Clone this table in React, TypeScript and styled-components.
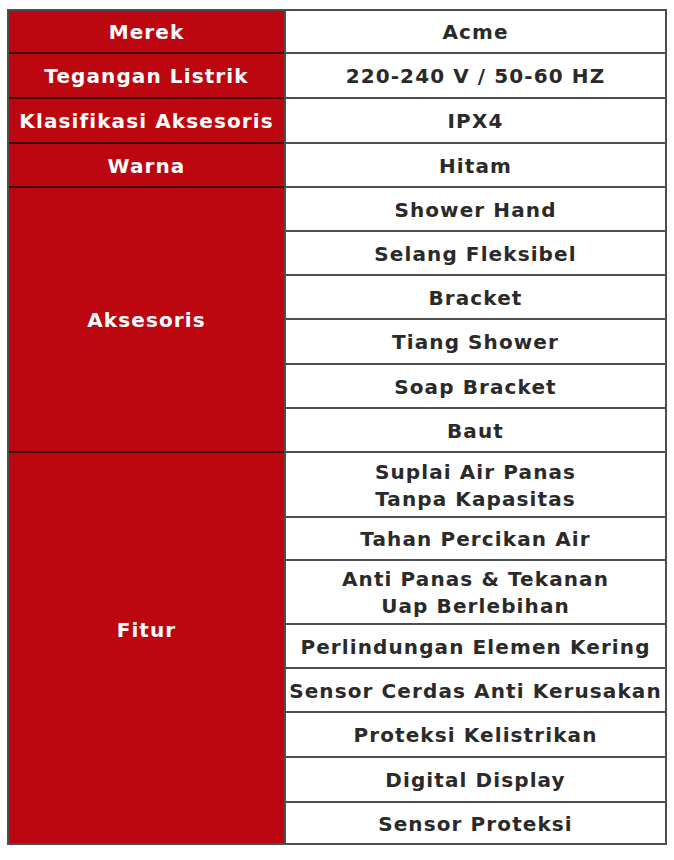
import React from "react";
import styled, { createGlobalStyle } from "styled-components";

const GlobalStyle = createGlobalStyle`
  html, body {
    margin: 0;
    padding: 0;
    background: #ffffff;
  }
  body {
    font-family: "DejaVu Sans", "Liberation Sans", sans-serif;
  }
`;

const Page = styled.div`
  padding: 9px 0 16px 7px;
`;

const SpecTable = styled.div`
  display: grid;
  width: 660px;
  box-sizing: border-box;
  grid-template-columns: 275px 379px;
  grid-template-rows: 41px 43px 43px 42px 42px 42px 42px 43px 42px 42px 63px 41px 62px 42px 42px 43px 43px 40px;
  gap: 2px;
  padding: 2px;
  background: #4e4e4e;
  font-family: "DejaVu Sans", "Liberation Sans", sans-serif;
  font-weight: 700;
  font-size: 20px;
  letter-spacing: 1.1px;
  line-height: 27px;
`;

const LabelCell = styled.div<{ $span: number; $nudge?: number; $divider?: boolean }>`
  grid-column: 1;
  grid-row: span ${(p) => p.$span};
  display: flex;
  align-items: center;
  justify-content: center;
  text-align: center;
  background: #bc0711;
  color: #ffffff;
  padding-top: 2px;
  padding-bottom: ${(p) => p.$nudge ?? 0}px;
  box-shadow: ${(p) => (p.$divider ? "0 2px 0 #3c0508" : "none")};
  position: relative;
  white-space: nowrap;
`;

const ValueCell = styled.div`
  grid-column: 2;
  display: flex;
  flex-direction: column;
  align-items: center;
  justify-content: center;
  text-align: center;
  background: #ffffff;
  color: #2a2a2a;
  padding-top: 2px;
  white-space: nowrap;
`;

type Spec = { label: string; values: (string | string[])[]; nudge?: number };

const specs: Spec[] = [
  { label: "Merek", values: ["Acme"] },
  { label: "Tegangan Listrik", values: ["220-240 V / 50-60 HZ"] },
  { label: "Klasifikasi Aksesoris", values: ["IPX4"] },
  { label: "Warna", values: ["Hitam"] },
  {
    label: "Aksesoris",
    values: ["Shower Hand", "Selang Fleksibel", "Bracket", "Tiang Shower", "Soap Bracket", "Baut"],
  },
  {
    label: "Fitur",
    nudge: 38,
    values: [
      ["Suplai Air Panas", "Tanpa Kapasitas"],
      "Tahan Percikan Air",
      ["Anti Panas & Tekanan", "Uap Berlebihan"],
      "Perlindungan Elemen Kering",
      "Sensor Cerdas Anti Kerusakan",
      "Proteksi Kelistrikan",
      "Digital Display",
      "Sensor Proteksi",
    ],
  },
];

export default function App() {
  return (
    <>
      <GlobalStyle />
      <Page>
        <SpecTable>
          {specs.map((spec, i) => (
            <React.Fragment key={spec.label}>
              <LabelCell $span={spec.values.length} $nudge={spec.nudge} $divider={i < specs.length - 1}>
                {spec.label}
              </LabelCell>
              {spec.values.map((v, j) => (
                <ValueCell key={j}>
                  {Array.isArray(v) ? v.map((line) => <span key={line}>{line}</span>) : v}
                </ValueCell>
              ))}
            </React.Fragment>
          ))}
        </SpecTable>
      </Page>
    </>
  );
}
